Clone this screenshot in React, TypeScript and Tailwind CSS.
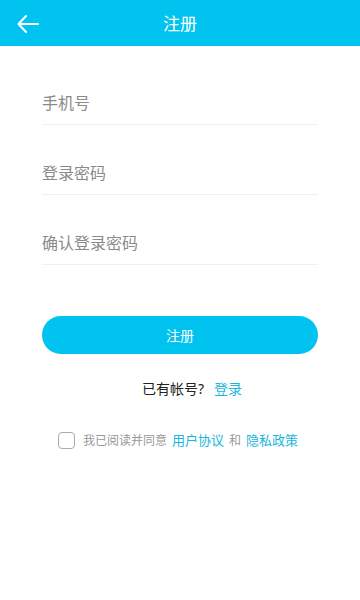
export default function App() {
  return (
    <div
      className="w-[360px] h-[600px] bg-white flex flex-col"
      style={{ fontFamily: '"Noto Sans", "Noto Sans CJK SC", sans-serif' }}
    >
      <header className="h-[46px] bg-[#00c3ef] flex items-center relative shrink-0">
        <button className="absolute left-[16px] top-[12px] w-[24px] h-[24px] flex items-center justify-center">
          <svg width="24" height="24" viewBox="0 0 24 24" fill="none" stroke="white" strokeWidth="2" strokeLinecap="round" strokeLinejoin="round">
            <path d="M22 12H3" />
            <path d="M10 4L2.5 12L10 20" />
          </svg>
        </button>
        <h1 className="flex-1 text-center text-white text-[17px] leading-none">注册</h1>
      </header>

      <div className="px-[42px] pt-[9px] flex flex-col">
        {['手机号', '登录密码', '确认登录密码'].map((p) => (
          <div key={p} className="h-[70px] flex items-end border-b border-[#f0f0f0] pb-[9px]">
            <input
              placeholder={p}
              className="w-full outline-none text-[16px] text-[#333] placeholder:text-[#8a8a8a] leading-[24px] bg-transparent"
            />
          </div>
        ))}

        <button className="mt-[51px] h-[38px] rounded-full bg-[#00c3ef] text-white text-[14px]">注册</button>

        <div className="mt-[24px] flex justify-center items-center text-[14px] pl-[24px]">
          <span className="text-[#222]">已有帐号?</span>
          <span className="ml-[10px] text-[#17b6dd]">登录</span>
        </div>

        <div className="mt-[32px] flex justify-center items-center text-[12px] gap-[5px] pr-[4px]">
          <span className="w-[17px] h-[17px] rounded-[4px] border-[1.5px] border-[#aaa] mr-[3px]" />
          <span className="text-[#999]">我已阅读并同意</span>
          <span className="text-[#17b6dd] text-[13px]">用户协议</span>
          <span className="text-[#999]">和</span>
          <span className="text-[#17b6dd] text-[13px]">隐私政策</span>
        </div>
      </div>
    </div>
  );
}
